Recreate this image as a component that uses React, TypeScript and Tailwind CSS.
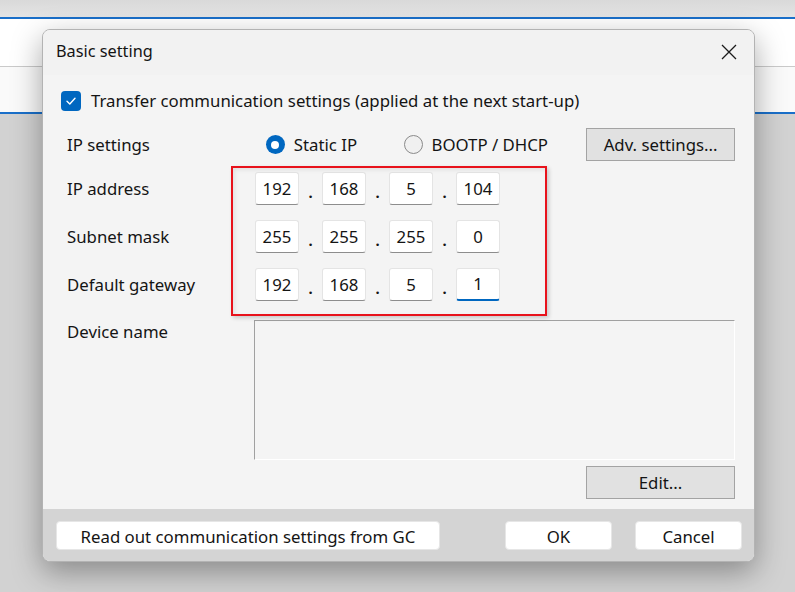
import React from 'react';

const fontStack = { fontFamily: '"Noto Sans", "Open Sans", Arial, sans-serif' };

const IpField: React.FC<{ values: string[]; focusLast?: boolean }> = ({ values, focusLast }) => (
  <div className="flex items-center h-[33px]">
    {values.map((v, i) => (
      <React.Fragment key={i}>
        {i > 0 && <span className="w-[23px] text-center leading-none pt-[7px] font-semibold">.</span>}
        <div
          className={`w-[44px] h-[33px] bg-white rounded-[3px] border border-[#e4e4e4] flex items-center justify-center ${
            focusLast && i === values.length - 1 ? 'border-b-2 border-b-[#0067c0]' : 'border-b-[#8d8d8d]'
          }`}
        >
          {v}
        </div>
      </React.Fragment>
    ))}
  </div>
);

const Radio: React.FC<{ checked?: boolean; label: string }> = ({ checked, label }) => (
  <div className="flex items-center gap-[9px]">
    {checked ? (
      <span className="w-[19px] h-[19px] rounded-full bg-[#0067c0] flex items-center justify-center">
        <span className="w-[8px] h-[8px] rounded-full bg-white" />
      </span>
    ) : (
      <span className="w-[19px] h-[19px] rounded-full border border-[#8a8a8a] bg-[#f0f0f0]" />
    )}
    <span>{label}</span>
  </div>
);

export default function App() {
  return (
    <div className="relative w-[795px] h-[592px] overflow-hidden bg-[#d2d2d2] text-[#141414]" style={fontStack}>
      {/* window behind */}
      <div className="flex flex-col">
        <div className="h-[17px] bg-gradient-to-b from-[#d9d9d9] to-[#e4e4e4]" />
        <div className="h-[2px] bg-[#1a6fc9]" />
        <div className="h-[47px] bg-white" />
        <div className="h-px bg-[#cacaca]" />
        <div className="h-[45px] bg-[#fafafa]" />
        <div className="h-[2px] bg-[#1a6fc9]" />
      </div>

      {/* dialog */}
      <div className="absolute left-[42px] top-[29px] w-[713px] h-[533px] rounded-[8px] border border-[#b3b3b3] bg-[#f4f4f4] overflow-hidden shadow-[0_10px_30px_rgba(0,0,0,0.35)] flex flex-col text-[16.8px]">
        <div className="h-[45px] shrink-0 bg-[#f2f2f2] flex items-center justify-between pl-[13px] pr-[17px] pb-[2px]">
          <span className="text-[16.3px]">Basic setting</span>
          <svg width="16" height="16" viewBox="0 0 16 16" className="text-[#1b1b1b]">
            <path d="M1 1 L15 15 M15 1 L1 15" stroke="currentColor" strokeWidth="1.3" fill="none" />
          </svg>
        </div>

        <div className="flex-1 flex flex-col pl-[18px] pr-[19px] pt-[16px]">
          <div className="flex items-center gap-[10px] h-[20px]">
            <span className="w-[20px] h-[20px] rounded-[4px] bg-[#0067c0] flex items-center justify-center">
              <svg width="12" height="12" viewBox="0 0 12 12">
                <path d="M2 6.3 L4.8 9 L10 3.2" stroke="white" strokeWidth="1.4" fill="none" strokeLinecap="round" strokeLinejoin="round" />
              </svg>
            </span>
            <span>Transfer communication settings (applied at the next start-up)</span>
          </div>

          <div className="mt-[17px] flex items-center h-[33px] pl-[6px]">
            <span className="w-[199px]">IP settings</span>
            <div className="w-[138px]">
              <Radio checked label="Static IP" />
            </div>
            <div className="w-[183px]">
              <Radio label="BOOTP / DHCP" />
            </div>
            <button className="w-[149px] h-[33px] bg-[#e1e1e1] border border-[#a3a3a3]">Adv. settings...</button>
          </div>

          <div className="relative mt-[11px] flex flex-col gap-[15px] pl-[6px]">
            {[
              { label: 'IP address', values: ['192', '168', '5', '104'] },
              { label: 'Subnet mask', values: ['255', '255', '255', '0'] },
              { label: 'Default gateway', values: ['192', '168', '5', '1'], focus: true },
            ].map((row) => (
              <div key={row.label} className="flex items-center">
                <span className="w-[188px]">{row.label}</span>
                <IpField values={row.values} focusLast={row.focus} />
              </div>
            ))}
            <div className="absolute left-[170px] top-[-6px] w-[316px] h-[150px] border-2 border-[#e8121b] shadow-[2px_2px_4px_rgba(0,0,0,0.18),inset_2px_2px_4px_rgba(0,0,0,0.08)] pointer-events-none" />
          </div>

          <div className="mt-[19px] flex pl-[6px]">
            <span className="w-[187px] -mt-[1px]">Device name</span>
            <div className="w-[482px] h-[140px] border-l border-t border-[#a0a0a0] border-r border-b border-r-white border-b-white bg-[#f4f4f4]" />
          </div>

          <div className="mt-[6px] flex justify-end">
            <button className="w-[149px] h-[33px] bg-[#e1e1e1] border border-[#a3a3a3]">Edit...</button>
          </div>
        </div>

        <div className="h-[52px] shrink-0 bg-[#d4d4d4] flex items-start pt-[12px] pl-[13px] pr-[12px]">
          <button className="w-[384px] h-[29px] pt-[2px] bg-white rounded-[4px] border border-[#e6e6e6]">Read out communication settings from GC</button>
          <div className="flex-1" />
          <button className="w-[107px] h-[29px] pt-[2px] bg-white rounded-[4px] border border-[#e6e6e6]">OK</button>
          <button className="ml-[23px] w-[107px] h-[29px] pt-[2px] bg-white rounded-[4px] border border-[#e6e6e6]">Cancel</button>
        </div>
      </div>
    </div>
  );
}
